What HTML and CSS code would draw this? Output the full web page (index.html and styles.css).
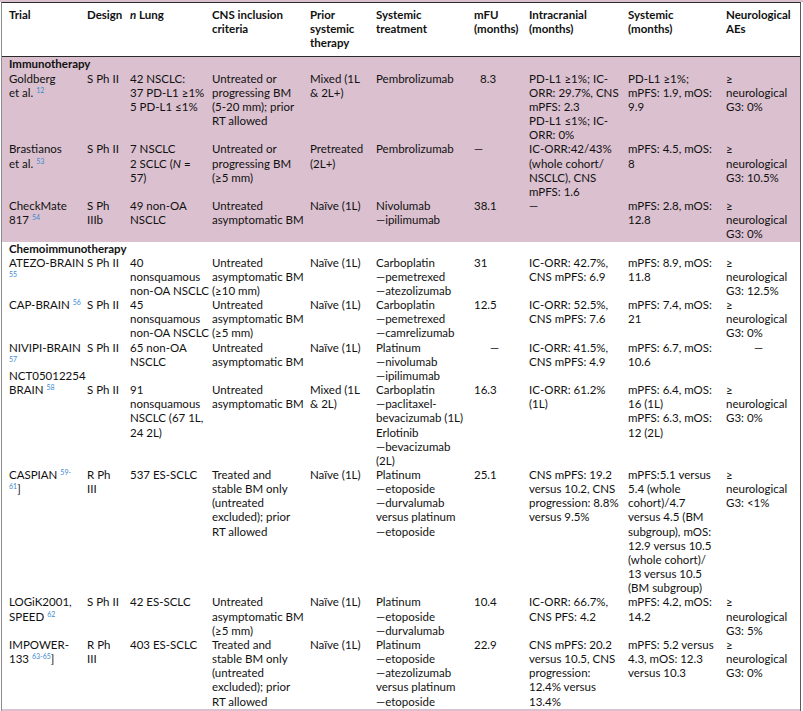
FILE: index.html
```html
<!DOCTYPE html>
<html lang="en">
<head>
<meta charset="utf-8">
<title>Trials table</title>
<link rel="stylesheet" href="styles.css">
</head>
<body>
<div class="top-strip"></div>
<div class="frame">
<table class="trials">
<colgroup>
<col class="c-trial"><col class="c-design"><col class="c-lung"><col class="c-cns"><col class="c-prior"><col class="c-treat"><col class="c-mfu"><col class="c-ic"><col class="c-sys"><col class="c-ae">
</colgroup>
<thead>
<tr>
<th>Trial</th>
<th>Design</th>
<th><i>n</i> Lung</th>
<th>CNS inclusion<br>criteria</th>
<th>Prior<br>systemic<br>therapy</th>
<th>Systemic<br>treatment</th>
<th>mFU<br>(months)</th>
<th>Intracranial<br>(months)</th>
<th>Systemic<br>(months)</th>
<th>Neurological<br>AEs</th>
</tr>
</thead>
<tbody class="pink">
<tr class="section"><td colspan="10">Immunotherapy</td></tr>
<tr>
<td>Goldberg<br>et al. <sup class="ref">12</sup></td>
<td>S Ph II</td>
<td>42 NSCLC:<br>37 PD-L1 ≥1%<br>5 PD-L1 ≤1%</td>
<td>Untreated or<br>progressing BM<br>(5-20 mm); prior<br>RT allowed</td>
<td>Mixed (1L<br>&amp; 2L+)</td>
<td>Pembrolizumab</td>
<td class="ind">8.3</td>
<td>PD-L1 ≥1%; IC-<br>ORR: 29.7%, CNS<br>mPFS: 2.3<br>PD-L1 ≤1%; IC-<br>ORR: 0%</td>
<td>PD-L1 ≥1%;<br>mPFS: 1.9, mOS:<br>9.9</td>
<td>≥<br>neurological<br>G3: 0%</td>
</tr>
<tr>
<td>Brastianos<br>et al. <sup class="ref">53</sup></td>
<td>S Ph II</td>
<td>7 NSCLC<br>2 SCLC (<i>N</i> =<br>57)</td>
<td>Untreated or<br>progressing BM<br>(≥5 mm)</td>
<td>Pretreated<br>(2L+)</td>
<td>Pembrolizumab</td>
<td>—</td>
<td>IC-ORR:42/43%<br>(whole cohort/<br>NSCLC), CNS<br>mPFS: 1.6</td>
<td>mPFS: 4.5, mOS:<br>8</td>
<td>≥<br>neurological<br>G3: 10.5%</td>
</tr>
<tr>
<td>CheckMate<br>817 <sup class="ref">54</sup></td>
<td>S Ph<br>IIIb</td>
<td>49 non-OA<br>NSCLC</td>
<td>Untreated<br>asymptomatic BM</td>
<td>Naïve (1L)</td>
<td>Nivolumab<br>—ipilimumab</td>
<td>38.1</td>
<td>—</td>
<td>mPFS: 2.8, mOS:<br>12.8</td>
<td>≥<br>neurological<br>G3: 0%</td>
</tr>
</tbody>
<tbody>
<tr class="section"><td colspan="10">Chemoimmunotherapy</td></tr>
<tr>
<td>ATEZO-BRAIN<br><sup class="ref">55</sup></td>
<td>S Ph II</td>
<td>40<br>nonsquamous<br>non-OA NSCLC</td>
<td>Untreated<br>asymptomatic BM<br>(≥10 mm)</td>
<td>Naïve (1L)</td>
<td>Carboplatin<br>—pemetrexed<br>—atezolizumab</td>
<td>31</td>
<td>IC-ORR: 42.7%,<br>CNS mPFS: 6.9</td>
<td>mPFS: 8.9, mOS:<br>11.8</td>
<td>≥<br>neurological<br>G3: 12.5%</td>
</tr>
<tr>
<td>CAP-BRAIN <sup class="ref">56</sup></td>
<td>S Ph II</td>
<td>45<br>nonsquamous<br>non-OA NSCLC</td>
<td>Untreated<br>asymptomatic BM<br>(≥5 mm)</td>
<td>Naïve (1L)</td>
<td>Carboplatin<br>—pemetrexed<br>—camrelizumab</td>
<td>12.5</td>
<td>IC-ORR: 52.5%,<br>CNS mPFS: 7.6</td>
<td>mPFS: 7.4, mOS:<br>21</td>
<td>≥<br>neurological<br>G3: 0%</td>
</tr>
<tr>
<td>NIVIPI-BRAIN<br><sup class="ref">57</sup><br>NCT05012254</td>
<td>S Ph II</td>
<td>65 non-OA<br>NSCLC</td>
<td>Untreated<br>asymptomatic BM</td>
<td>Naïve (1L)</td>
<td>Platinum<br>—nivolumab<br>—ipilimumab</td>
<td class="mid">—</td>
<td>IC-ORR: 41.5%,<br>CNS mPFS: 4.9</td>
<td>mPFS: 6.7, mOS:<br>10.6</td>
<td class="mid-ae">—</td>
</tr>
<tr>
<td>BRAIN <sup class="ref">58</sup></td>
<td>S Ph II</td>
<td>91<br>nonsquamous<br>NSCLC (67 1L,<br>24 2L)</td>
<td>Untreated<br>asymptomatic BM</td>
<td>Mixed (1L<br>&amp; 2L)</td>
<td>Carboplatin<br>—paclitaxel-<br>bevacizumab (1L)<br>Erlotinib<br>—bevacizumab<br>(2L)</td>
<td>16.3</td>
<td>IC-ORR: 61.2%<br>(1L)</td>
<td>mPFS: 6.4, mOS:<br>16 (1L)<br>mPFS: 6.3, mOS:<br>12 (2L)</td>
<td>≥<br>neurological<br>G3: 0%</td>
</tr>
<tr>
<td>CASPIAN <sup class="ref">59-</sup><br><sup class="ref">61</sup>]</td>
<td>R Ph<br>III</td>
<td>537 ES-SCLC</td>
<td>Treated and<br>stable BM only<br>(untreated<br>excluded); prior<br>RT allowed</td>
<td>Naïve (1L)</td>
<td>Platinum<br>—etoposide<br>—durvalumab<br>versus platinum<br>—etoposide</td>
<td>25.1</td>
<td>CNS mPFS: 19.2<br>versus 10.2, CNS<br>progression: 8.8%<br>versus 9.5%</td>
<td>mPFS:5.1 versus<br>5.4 (whole<br>cohort)/4.7<br>versus 4.5 (BM<br>subgroup), mOS:<br>12.9 versus 10.5<br>(whole cohort)/<br>13 versus 10.5<br>(BM subgroup)</td>
<td>≥<br>neurological<br>G3: &lt;1%</td>
</tr>
<tr>
<td>LOGiK2001,<br>SPEED <sup class="ref">62</sup></td>
<td>S Ph II</td>
<td>42 ES-SCLC</td>
<td>Untreated<br>asymptomatic BM<br>(≥5 mm)</td>
<td>Naïve (1L)</td>
<td>Platinum<br>—etoposide<br>—durvalumab</td>
<td>10.4</td>
<td>IC-ORR: 66.7%,<br>CNS PFS: 4.2</td>
<td>mPFS: 4.2, mOS:<br>14.2</td>
<td>≥<br>neurological<br>G3: 5%</td>
</tr>
<tr>
<td>IMPOWER-<br>133 <sup class="ref">63-65</sup>]</td>
<td>R Ph<br>III</td>
<td>403 ES-SCLC</td>
<td>Treated and<br>stable BM only<br>(untreated<br>excluded); prior<br>RT allowed</td>
<td>Naïve (1L)</td>
<td>Platinum<br>—etoposide<br>—atezolizumab<br>versus platinum<br>—etoposide</td>
<td>22.9</td>
<td>CNS mPFS: 20.2<br>versus 10.5, CNS<br>progression:<br>12.4% versus<br>13.4%</td>
<td>mPFS: 5.2 versus<br>4.3, mOS: 12.3<br>versus 10.3</td>
<td>≥<br>neurological<br>G3: 0%</td>
</tr>
</tbody>
<tbody class="pink">
<tr class="tail"><td colspan="10"></td></tr>
</tbody>
</table>
</div>
</body>
</html>
```
FILE: styles.css
```css
html, body {
  margin: 0;
  padding: 0;
  background: #ffffff;
}
body {
  font-family: Lato, "Open Sans", sans-serif;
  font-size: 11.5px;
  color: #111111;
  width: 803px;
  overflow: hidden;
}
.top-strip {
  height: 2px;
  background: #dbc0cf;
}
.frame {
  margin: 0 2px 0 1px;
  border-top: 1px solid #2b2b2b;
  border-left: 1px solid #8c8c8c;
  border-right: 1px solid #5a5a5a;
}
.trials {
  width: 798px;
  border-collapse: collapse;
  table-layout: fixed;
}
.c-trial { width: 85px; }
.c-design { width: 43px; }
.c-lung { width: 82px; }
.c-cns { width: 98px; }
.c-prior { width: 66px; }
.c-treat { width: 98px; }
.c-mfu { width: 55px; }
.c-ic { width: 99px; }
.c-sys { width: 98px; }
.c-ae { width: 74px; }
.trials th,
.trials td {
  padding: 0;
  text-align: left;
  vertical-align: top;
  line-height: 14.15px;
  white-space: nowrap;
  overflow: visible;
}
.trials th:first-child,
.trials td:first-child {
  padding-left: 7px;
}
.trials thead th {
  font-weight: 700;
  padding-top: 5px;
  padding-bottom: 6px;
  border-bottom: 1px solid #2b2b2b;
}
.pink td {
  background: #dbc0cf;
}
.section td {
  font-weight: 700;
}
.tail td {
  height: 6px;
  line-height: 6px;
}
.ref {
  font-size: 7px;
  line-height: 0;
  vertical-align: 4px;
  color: #3b8bd0;
}
.ind { padding-left: 6px !important; }
.mid { padding-left: 16px !important; }
.mid-ae { padding-left: 28px !important; }
```
